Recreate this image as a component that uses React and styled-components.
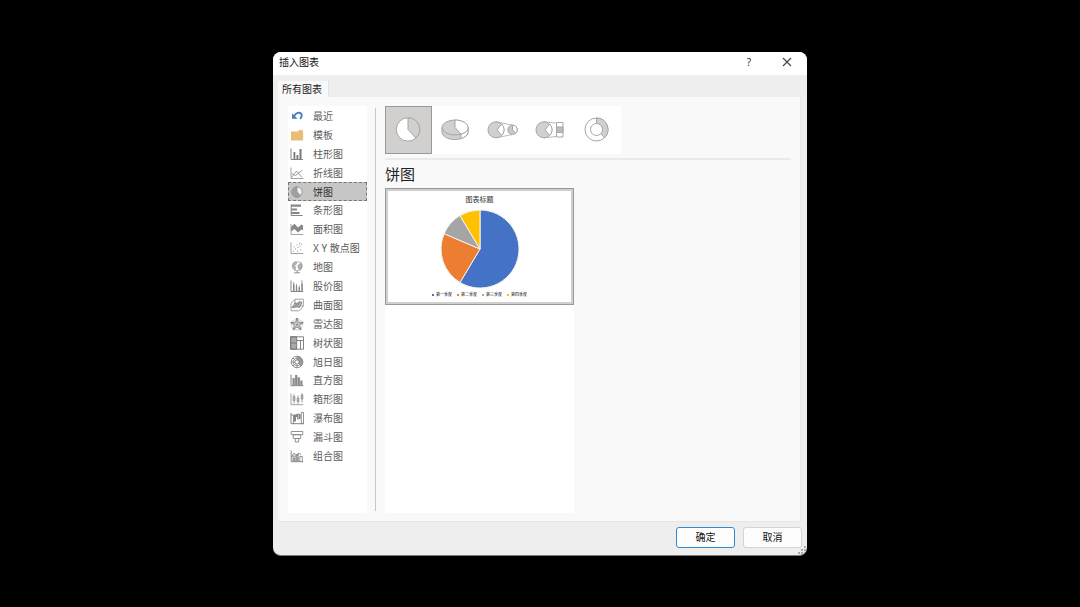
import React, { useState } from "react";
import styled, { createGlobalStyle } from "styled-components";

const GlobalStyle = createGlobalStyle`
  * { box-sizing: border-box; }
  body {
    margin: 0;
    background: #000;
    color: #222;
    font: 10px/14px "Noto Sans", "Noto Sans CJK SC", sans-serif;
  }
  button { font: inherit; color: inherit; padding: 0; margin: 0; border: 0; background: none; }
  svg { display: block; flex: none; }
`;

const Backdrop = styled.main`
  min-height: 100vh;
  display: flex;
  align-items: center;
  justify-content: center;
`;

const Dialog = styled.section`
  width: 100%;
  max-width: 534px;
  background: #eee;
  border-radius: 8px;
  overflow: hidden;
  border-bottom: 1px solid #777;
  position: relative;
`;

const TitleBar = styled.header`
  height: 23px;
  padding: 0 12px 2px 6px;
  display: flex;
  align-items: center;
  gap: 22px;
  background: #fff;
`;

const DialogTitle = styled.h1`
  flex: 1;
  margin: 0;
  font-size: 10px;
  font-weight: 400;
  color: #111;
`;

const WindowButton = styled.button`
  width: 16px;
  height: 16px;
  display: flex;
  align-items: center;
  justify-content: center;
  color: #333;
`;

const TabBar = styled.div`
  padding: 6px 5px 0;
  display: flex;
`;

const Tab = styled.button`
  height: 16px;
  padding: 0 6px 0 4px;
  background: #f9f9f9;
  border-right: 1px solid #e4e4e4;
  color: #222;
`;

const Panel = styled.div`
  margin: 0 6px 0 5px;
  padding: 9px 9px 8px 10px;
  display: flex;
  background: #f9f9f9;
  border-right: 1px solid #e6e6e6;
  border-bottom: 1px solid #e6e6e6;
`;

const CategoryList = styled.nav`
  width: 79px;
  min-height: 407px;
  flex: none;
  padding-top: 1px;
  background: #fff;
`;

const CategoryRows = styled.div`
  height: 359px;
  display: grid;
  grid-template-rows: repeat(19, 1fr);
`;

const Category = styled.button`
  display: flex;
  align-items: center;
  gap: 9px;
  padding-left: ${(p) => (p.$selected ? 1 : 2)}px;
  border: ${(p) => (p.$selected ? "1px dashed #777" : "0")};
  background: ${(p) => (p.$selected ? "#c8c6c4" : "transparent")};
  color: ${(p) => (p.$selected ? "#333" : "#5c5c5c")};
  white-space: nowrap;
  text-align: left;
`;

const Separator = styled.div`
  width: 1px;
  margin: 2px 9px 2px 8px;
  flex: none;
  background: #c8c8c8;
`;

const Content = styled.div`
  flex: 1;
  min-width: 0;
  display: flex;
  flex-direction: column;
`;

const TypeStrip = styled.div`
  align-self: flex-start;
  display: flex;
  padding-right: 1px;
  background: #fff;
`;

const TypeButton = styled.button`
  width: 47px;
  height: 48px;
  display: flex;
  align-items: center;
  justify-content: center;
  border: 1px solid ${(p) => (p.$selected ? "#999" : "transparent")};
  background: ${(p) => (p.$selected ? "#d1d0ce" : "transparent")};
`;

const Rule = styled.hr`
  width: 100%;
  height: 2px;
  margin: 4px 0;
  border: 0;
  background: #eaeaea;
`;

const TypeTitle = styled.h2`
  margin: 0;
  padding-bottom: 4px;
  font-size: 15px;
  line-height: 20px;
  font-weight: 400;
  color: #222;
`;

const Gallery = styled.div`
  flex: 1;
  width: 189px;
  background: #fff;
`;

const Preview = styled.button`
  width: 100%;
  height: 117px;
  display: flex;
  flex-direction: column;
  align-items: center;
  justify-content: center;
  gap: 3px;
  background: #fff;
  border: 1px solid #999;
  box-shadow: inset 0 0 0 2px #d0cfcd;
`;

const ChartTitle = styled.span`
  font-size: 7px;
  line-height: 12px;
  color: #333;
`;

const Legend = styled.span`
  display: flex;
  gap: 5px;
  font-size: 4px;
  line-height: 6px;
  color: #111;
`;

const LegendItem = styled.span`
  display: flex;
  align-items: center;
  gap: 2px;
  &::before {
    content: "";
    width: 2px;
    height: 2px;
    background: ${(p) => p.$color};
  }
`;

const Footer = styled.footer`
  padding: 5px 5px 7px;
  display: flex;
  justify-content: flex-end;
  gap: 8px;
`;

const ActionButton = styled.button`
  width: 59px;
  height: 21px;
  border: 1px solid ${(p) => (p.$primary ? "#2f8ad0" : "#d4d4d4")};
  border-radius: 3px;
  background: #fdfdfd;
  color: #111;
`;

const Grip = styled.svg`
  position: absolute;
  right: 0;
  bottom: 0;
`;

const D = "#777";
const L = "#b5b5b5";

const Icon = ({ children }) => (
  <svg width="14" height="14" viewBox="0 0 14 14" fill="none" stroke={D} strokeWidth=".9" aria-hidden="true">
    {children}
  </svg>
);

const icons = {
  recent: (
    <>
      <path d="M4 7.200C6 3.800 9.500 2.800 11.200 4.800c.9 1.200.5 3.200-1 5" stroke="#4a7ebb" strokeWidth="1.800" />
      <path d="M2 4.200v5.600h5.600z" fill="#4a7ebb" stroke="none" />
    </>
  ),
  template: <path d="M1 3.500h7l1-1.500h3.500l.6 1.500V12.500H1z" fill="#e9bd78" stroke="none" />,
  column: (
    <>
      <path d="M1 1.500v11h12" />
      <path d="M3.500 5h1.800v7.500H3.500zM6.500 8h1.800v4.500H6.500zM9.500 2h2v10.500h-2z" fill={D} stroke="none" />
    </>
  ),
  line: (
    <>
      <path d="M1 1.500v11h12.500" stroke="#999" />
      <path d="M1.500 11.500 6.500 5l5.500 6.500M1.500 7.500l4 2L12.500 4" stroke="#888" strokeWidth=".8" />
    </>
  ),
  pie: (
    <>
      <circle cx="7" cy="7" r="5.200" fill="#f2f2f2" stroke="#999" />
      <path d="M7 1.800V7l3.900 3.500A5.200 5.200 0 1 1 7 1.800z" fill="#a0a0a0" stroke="#999" />
    </>
  ),
  bar: (
    <>
      <path d="M1.200 1.500v11h11.500" />
      <path d="M1 1.500h10v2.300H1zM1 5.500h6v2H1zM1 9h8.500v2H1z" fill="#888" stroke="none" />
    </>
  ),
  area: (
    <>
      <path d="M1 5 4.500 1.800 8 5.500l3.500-3L13 3.500v5l-1.600-1L8 10.500 4.500 7 1 9.500z" fill="#888" stroke="none" />
      <path d="M1 2v10.500h12.200" stroke="#999" />
    </>
  ),
  scatter: (
    <>
      <path d="M1 1.500v11h12.200" stroke="#999" />
      <path d="M3 10.200h1M5 8h1M3.500 6h1M7 10.200h1M7.500 6.500h1M6.500 4h1M9.500 5h1M10 9h1M11 3h1M9 2.500h1" stroke="#888" />
    </>
  ),
  map: (
    <>
      <circle cx="6.700" cy="6.200" r="4.500" stroke="#aaa" />
      <path d="M3 3.200 5.500 1.800 7 3 5.700 4.800 4 5.500 5.700 7 5 10.200 3 7zM8 5l2.800-1 .6 3L9.600 10 8 8z" fill={L} stroke="#999" strokeWidth=".6" />
      <path d="M10 1.500c3 2.800 2.800 7-.5 9M4 12.800h6M7 10.800v2" stroke="#888" />
    </>
  ),
  stock: (
    <>
      <path d="M1 1.500v11h12.200" />
      <path d="M3.700 3v9M6.500 5v7M9.300 6.500V12M12 1.200V12" strokeWidth=".7" />
      <path d="M3 5h1.400v7H3zM5.800 7h1.400v5H5.800zM8.600 8.500H10V12H8.600zM11.300 4.500h1.400V12h-1.400z" fill="#888" stroke="none" />
    </>
  ),
  surface: (
    <>
      <path d="M1 12.800V5.500L5 1.200h8.300v7.300l-4.300 4.300zM1 9.500 5 8h8M5 1.200V8" stroke="#999" />
      <path d="M2.500 9.800 4.800 5 7 5.500l2.500-2 2.500 1-2.500 5L7 8.800z" fill={L} stroke={D} strokeWidth=".8" />
      <path d="M5 9 7 5.500M7.500 8.500l2-4.500" strokeWidth=".7" />
    </>
  ),
  radar: (
    <>
      <path d="M7 1 13.200 5.500 10.900 12.800H3.100L.8 5.500z" stroke="#bbb" strokeWidth=".7" />
      <path d="m7 1 1.500 4.200 4.700.3-3.600 3 1.300 4.300L7 10l-3.900 2.800 1.300-4.300-3.600-3 4.700-.3z" fill="#ddd" strokeWidth=".8" />
      <path d="M7 1v6.800M.8 5.500 7 7.800l6.200-2.300M3.100 12.800 7 7.800l3.900 5" strokeWidth=".6" />
    </>
  ),
  treemap: (
    <>
      <path d="M.7.8h6v12.400h-6z" fill="#aaa" />
      <path d="M.7.8h12.800v12.400H.7zM6.700 4.500h6.800M10.500 4.500v8.700M.7 7h6" />
    </>
  ),
  sunburst: (
    <>
      <circle cx="7" cy="7" r="5.800" fill="#f4f4f4" stroke="#888" />
      <path d="M7 1.200v3.800a2 2 0 0 1 1.400 3.400l2.700 2.700A5.800 5.800 0 0 0 7 1.200z" fill="#999" stroke="#888" strokeWidth=".7" />
      <circle cx="7" cy="7" r="2" fill="#fff" strokeWidth=".7" />
      <path d="M7 3.200a3.800 3.800 0 1 0 2.700 6.500M3 3l2.600 2.600M1.200 7H5M3 11l2.600-2.600M7 9v3.800" strokeWidth=".7" />
    </>
  ),
  histogram: (
    <>
      <path d="M1 1.500v11.200h12.400" />
      <path d="M2.500 5h2.200v7.500H2.500zM5.100 2h2.200v10.500H5.100zM7.700 4.200h2.200v8.300H7.700zM10.300 7.500h2.200v5h-2.200z" fill="#888" stroke="none" />
    </>
  ),
  box: (
    <>
      <path d="M1 1.500v11.200h12.400" stroke="#999" />
      <path d="M4 2v9.500M8 3.500V12M12 1v9.500M3.200 4.500h1.700v4H3.200zM7.200 6h1.700v3.500H7.200zM11.200 3h1.700v4h-1.700z" stroke="#888" strokeWidth=".8" />
    </>
  ),
  waterfall: (
    <>
      <path d="M1 2v10.700h12.500" />
      <path d="M1 4.200h2.500v8.500M7.500 3h1.500v5H7.500zM11.300 1.500h2.200v11.200h-2.200z" strokeWidth=".8" />
      <path d="M3.500 3.500h2.500v7H3.500zM6 3h1.700v3H6zM9 3h1.700v5H9z" fill="#888" stroke="none" />
    </>
  ),
  funnel: <path d="M1.200 1.500h11.600v3.200H1.200zM3.300 4.700h7.400v3.800H3.300zM5.300 8.500h3.400v3.500H5.300z" stroke="#888" />,
  combo: (
    <>
      <path d="M1.200 1.500v11.200h12" />
      <path d="M3 12.500V7h2v5.500M6.200 12.500V5.500h2v7M9.800 12.500V7.500h2.500v5M1.500 8 4 4l3 3.500L8.500 4 11 5.500" strokeWidth=".8" />
      <path d="M3 9h2v3.500H3zM6.200 8h2v4.500h-2z" fill="#999" stroke="none" />
    </>
  ),
};

const categories = [
  ["recent", "最近"],
  ["template", "模板"],
  ["column", "柱形图"],
  ["line", "折线图"],
  ["pie", "饼图"],
  ["bar", "条形图"],
  ["area", "面积图"],
  ["scatter", "X Y 散点图"],
  ["map", "地图"],
  ["stock", "股价图"],
  ["surface", "曲面图"],
  ["radar", "雷达图"],
  ["treemap", "树状图"],
  ["sunburst", "旭日图"],
  ["histogram", "直方图"],
  ["box", "箱形图"],
  ["waterfall", "瀑布图"],
  ["funnel", "漏斗图"],
  ["combo", "组合图"],
];

const TypeIcon = ({ children }) => (
  <svg width="31" height="28" viewBox="1 0 31 28" fill="none" stroke="#a6a6a6" aria-hidden="true">
    {children}
  </svg>
);

const types = [
  [
    "饼图",
    <>
      <circle cx="16" cy="13.500" r="11.700" fill="#fff" />
      <path d="M16 1.800v11.700l8 8.500A11.700 11.700 0 0 0 16 1.800z" fill="#d1d0ce" />
    </>,
  ],
  [
    "三维饼图",
    <>
      <path d="M3 11.500v4.500c0 4.200 5.800 7.500 13 7.500s13-3.300 13-7.500v-4.500z" fill="#d0d0d0" />
      <path d="M22 18v4.600c4.300-1.400 7-3.800 7-6.600v-4.500z" fill="#fff" />
      <ellipse cx="16" cy="11.500" rx="13" ry="7.500" fill="#d0d0d0" />
      <path d="M16 4v7.500l6 6.600c4.300-1.200 7-3.700 7-6.600C29 7.400 23.200 4 16 4z" fill="#fff" />
    </>,
  ],
  [
    "子母饼图",
    <>
      <path d="M10 5.800 26 9M10 21.800 26 18.600" stroke="#bbb" />
      <circle cx="10" cy="13.800" r="8" fill="#d0d0d0" />
      <path d="m11 13.800 4.700-5.700a8 8 0 0 1 0 11.400z" fill="#fff" />
      <circle cx="26.500" cy="13.800" r="4.700" fill="#c8c8c8" />
      <path d="M26.500 9.100v4.700l3.300 3.400a4.700 4.700 0 0 0-3.300-8.100z" fill="#fff" />
    </>,
  ],
  [
    "复合条饼图",
    <>
      <path d="M11 5.800 23 7M11 21.800 23 20.500" stroke="#bbb" />
      <circle cx="11" cy="13.800" r="8" fill="#d0d0d0" />
      <path d="m12 13.800 4.700-5.700a8 8 0 0 1 0 11.400z" fill="#fff" />
      <path d="M23.500 6.500h6.500v14.500h-6.500z" fill="#fff" />
      <path d="M23.500 11h6.500v5.500h-6.500z" fill="#bbb" />
    </>,
  ],
  [
    "圆环图",
    <>
      <circle cx="16.500" cy="13.500" r="11.500" fill="#fff" />
      <path d="M16.500 2a11.500 11.500 0 0 1 8 19.700l-3.800-4a6 6 0 0 0-4.200-10.200z" fill="#d0d0d0" />
      <circle cx="16.500" cy="13.500" r="6" fill="#fff" />
    </>,
  ],
];

const quarters = [
  { label: "第一季度", value: 8.2, color: "#4472c4" },
  { label: "第二季度", value: 3.2, color: "#ed7d31" },
  { label: "第三季度", value: 1.4, color: "#a5a5a5" },
  { label: "第四季度", value: 1.2, color: "#ffc000" },
];

function PieChart() {
  const total = quarters.reduce((sum, q) => sum + q.value, 0);
  const point = (t) => `${40 + 39 * Math.sin(2 * Math.PI * t)} ${40 - 39 * Math.cos(2 * Math.PI * t)}`;
  let start = 0;
  return (
    <svg width="80" height="80" viewBox="0 0 80 80" stroke="#f3f3f3" strokeLinejoin="round" aria-hidden="true">
      {quarters.map((q) => {
        const end = start + q.value / total;
        const large = end - start > 0.5 ? 1 : 0;
        const d = `M40 40L${point(start)}A39 39 0 ${large} 1 ${point(end)}z`;
        start = end;
        return <path key={q.label} d={d} fill={q.color} />;
      })}
    </svg>
  );
}

export default function App() {
  const [category, setCategory] = useState("pie");
  const [type, setType] = useState(0);
  return (
    <>
      <GlobalStyle />
      <Backdrop>
        <Dialog role="dialog" aria-labelledby="dialog-title" lang="zh-CN">
          <TitleBar>
            <DialogTitle id="dialog-title">插入图表</DialogTitle>
            <WindowButton aria-label="帮助">?</WindowButton>
            <WindowButton aria-label="关闭">
              <svg width="10" height="10" viewBox="0 0 10 10" stroke="#444" strokeWidth="1.100">
                <path d="m1 1 8 8M9 1 1 9" />
              </svg>
            </WindowButton>
          </TitleBar>
          <TabBar role="tablist">
            <Tab role="tab" aria-selected="true">所有图表</Tab>
          </TabBar>
          <Panel>
            <CategoryList>
              <CategoryRows>
                {categories.map(([id, label]) => (
                  <Category key={id} $selected={id === category} aria-pressed={id === category} onClick={() => setCategory(id)}>
                    <Icon>{icons[id]}</Icon>
                    {label}
                  </Category>
                ))}
              </CategoryRows>
            </CategoryList>
            <Separator />
            <Content>
              <TypeStrip>
                {types.map(([label, drawing], i) => (
                  <TypeButton key={label} $selected={i === type} aria-label={label} onClick={() => setType(i)}>
                    <TypeIcon>{drawing}</TypeIcon>
                  </TypeButton>
                ))}
              </TypeStrip>
              <Rule />
              <TypeTitle>饼图</TypeTitle>
              <Gallery>
                <Preview>
                  <ChartTitle>图表标题</ChartTitle>
                  <PieChart />
                  <Legend>
                    {quarters.map((q) => (
                      <LegendItem key={q.label} $color={q.color}>{q.label}</LegendItem>
                    ))}
                  </Legend>
                </Preview>
              </Gallery>
            </Content>
          </Panel>
          <Footer>
            <ActionButton $primary>确定</ActionButton>
            <ActionButton>取消</ActionButton>
          </Footer>
          <Grip width="10" height="10" viewBox="0 0 10 10" fill="#aaa" aria-hidden="true">
            <path d="M7 1h2v2H7zM4 4h2v2H4zM7 4h2v2H7zM1 7h2v2H1zM4 7h2v2H4zM7 7h2v2H7z" />
          </Grip>
        </Dialog>
      </Backdrop>
    </>
  );
}
